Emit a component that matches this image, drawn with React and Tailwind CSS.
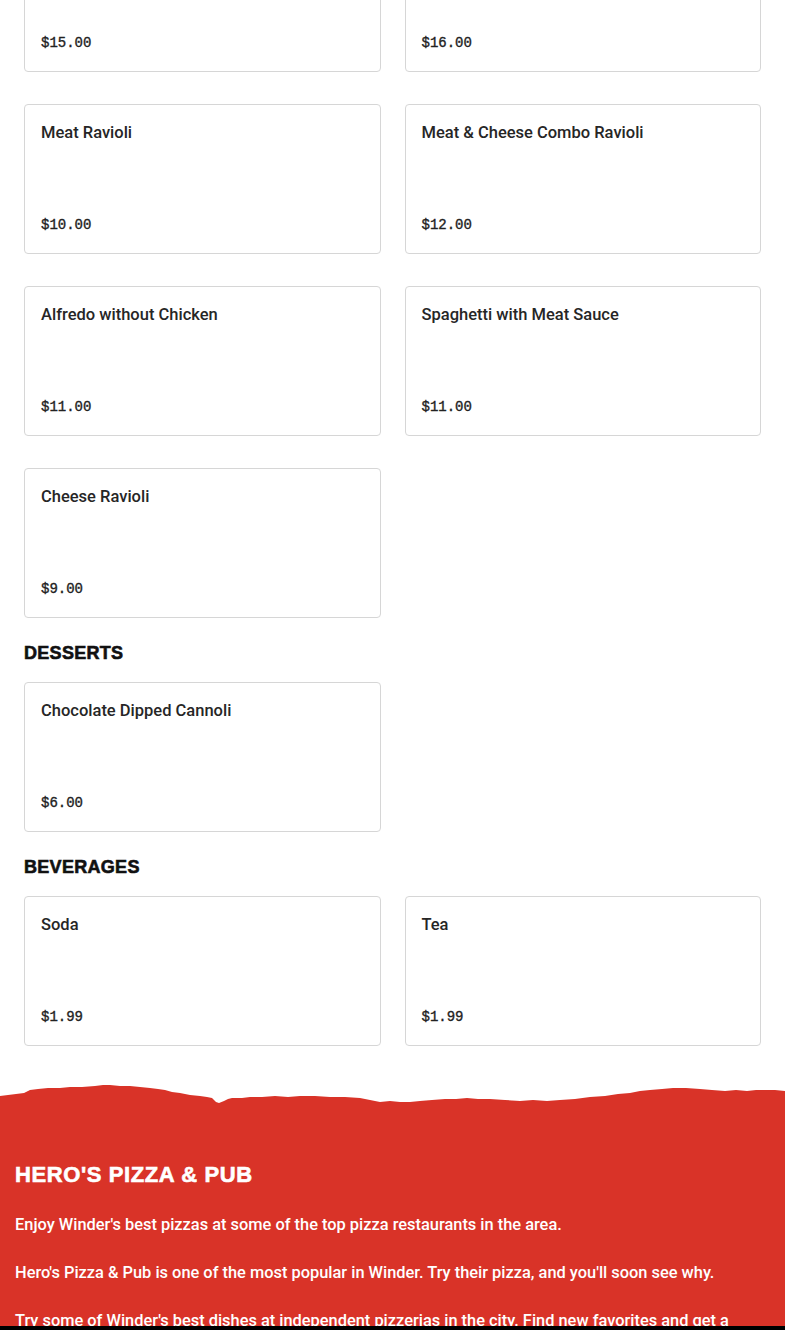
import React from "react";

const sections = [
  {
    title: null,
    items: [
      { name: "Chicken Alfredo", price: "$15.00" },
      { name: "Lasagna", price: "$16.00" },
      { name: "Meat Ravioli", price: "$10.00" },
      { name: "Meat & Cheese Combo Ravioli", price: "$12.00" },
      { name: "Alfredo without Chicken", price: "$11.00" },
      { name: "Spaghetti with Meat Sauce", price: "$11.00" },
      { name: "Cheese Ravioli", price: "$9.00" },
    ],
  },
  {
    title: "DESSERTS",
    items: [{ name: "Chocolate Dipped Cannoli", price: "$6.00" }],
  },
  {
    title: "BEVERAGES",
    items: [
      { name: "Soda", price: "$1.99" },
      { name: "Tea", price: "$1.99" },
    ],
  },
];

const MenuCard = ({ name, price }) => {
  return (
    <div className="h-[150px] border border-[#d6d6d6] rounded-[4px] bg-white p-4 flex flex-col justify-between">
      <div className="text-[16.5px] leading-6 font-medium text-[#262626] font-[Roboto,Liberation_Sans,sans-serif]">{name}</div>
      <div className="text-[14px] leading-6 text-[#222] font-[Liberation_Mono,monospace] [-webkit-text-stroke:0.35px_#222]">
        {price}
      </div>
    </div>
  );
};

const TornEdge = () => (
  <svg viewBox="0 0 785 26" className="block w-full h-[26px]" preserveAspectRatio="none">
    <path
      fill="#d93328"
      d="M0 14 L8 13 L16 12 L24 11 L30 8 L38 7 L48 6 L60 6 L70 5 L82 5 L95 4 L103 3 L110 3 L120 4 L130 4 L140 5 L150 6 L158 7 L165 8 L172 10 L180 11 L190 13 L200 14 L207 15 L212 16 L216 20 L219 21 L224 19 L228 17 L232 16 L242 16 L250 15 L262 15 L275 14 L288 15 L300 14 L315 14 L330 15 L345 15 L360 16 L370 18 L380 20 L390 19 L400 20 L410 20 L420 19 L432 18 L445 17 L456 17 L467 16 L478 17 L490 17 L505 18 L520 19 L533 18 L547 19 L560 18 L575 17 L590 15 L605 14 L618 12 L630 11 L640 9 L650 8 L662 7 L673 6 L686 6 L700 7 L712 8 L725 9 L736 8 L747 9 L756 8 L765 8 L775 8 L785 9 L785 26 L0 26 Z"
    />
  </svg>
);

export default function App() {
  return (
    <div className="bg-white min-h-screen overflow-hidden font-[Liberation_Sans,Arial,sans-serif]">
      <div className="px-6">
        {sections.map((section, i) => (
          <div key={i} className={section.title ? "mt-[21px]" : "-mt-[78px]"}>
            {section.title && (
              <h2 className="text-[18px] leading-7 font-bold tracking-[0.3px] text-[#111] mb-[15px] [-webkit-text-stroke:0.6px_#111]">
                {section.title}
              </h2>
            )}
            <div className="grid grid-cols-2 gap-x-6 gap-y-8">
              {section.items.map((item) => (
                <MenuCard key={item.name} {...item} />
              ))}
            </div>
          </div>
        ))}
      </div>

      <div className="mt-[36px]">
        <TornEdge />
        <div className="bg-[#d93328] px-[15px] pt-[53px] pb-16 text-white">
          <h2 className="text-[22px] leading-7 font-bold tracking-[0.6px] [-webkit-text-stroke:0.6px_#fff]">
            HERO'S PIZZA &amp; PUB
          </h2>
          <div className="text-[16.4px] leading-6 font-medium font-[Roboto,Liberation_Sans,sans-serif]">
            <p className="mt-6">Enjoy Winder's best pizzas at some of the top pizza restaurants in the area.</p>
            <p className="mt-6">
              Hero's Pizza &amp; Pub is one of the most popular in Winder. Try their pizza, and you'll soon see why.
            </p>
            <p className="mt-6">
              Try some of Winder's best dishes at independent pizzerias in the city. Find new favorites and get a
              delicious taste of local flavor.
            </p>
          </div>
        </div>
      </div>

      <div className="fixed left-0 right-0 bottom-0 h-[4px] bg-black" />
    </div>
  );
}
